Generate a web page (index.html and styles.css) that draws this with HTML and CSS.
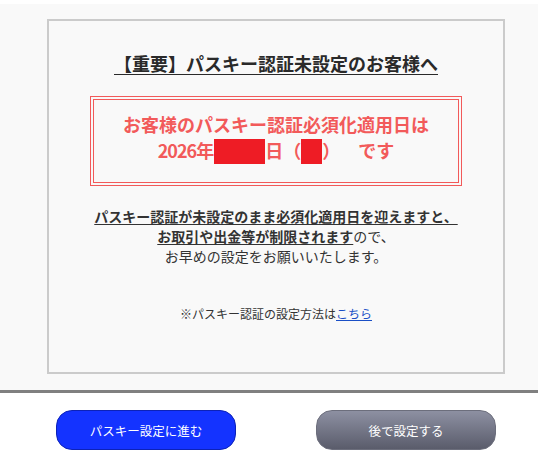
FILE: index.html
```html
<!DOCTYPE html>
<html lang="ja">
<head>
<meta charset="utf-8">
<link rel="stylesheet" href="styles.css">
</head>
<body>
<div class="top-gap"></div>
<div class="panel">
  <div class="notice">
    <h1 class="title">【重要】パスキー認証未設定のお客様へ</h1>
    <div class="alert">
      <div class="alert-inner">
        <p class="alert-line">お客様のパスキー認証必須化適用日は</p>
        <p class="alert-line"><span class="year">2026</span>年<span class="redact redact-wide"></span>日（<span class="redact redact-narrow"></span>）<span class="gap"></span>です</p>
      </div>
    </div>
    <div class="body-text">
      <p class="line"><span class="em">パスキー認証が未設定のまま必須化適用日を迎えますと、</span></p>
      <p class="line"><span class="em">お取引や出金等が制限されます</span>ので、</p>
      <p class="line">お早めの設定をお願いいたします。</p>
    </div>
    <p class="howto">※パスキー認証の設定方法は<a class="link" href="#">こちら</a></p>
  </div>
</div>
<div class="actions">
  <button class="btn btn-primary">パスキー設定に進む</button>
  <button class="btn btn-secondary">後で設定する</button>
</div>
</body>
</html>
```
FILE: styles.css
```css
html, body {
  margin: 0;
  padding: 0;
  background: #ffffff;
}
body {
  font-family: "Noto Sans CJK JP", "Noto Sans", sans-serif;
  color: #333333;
  padding-left: 14px;
}
p, h1 { margin: 0; }

.top-gap { height: 4px; }

.panel {
  background: #f9f9f9;
  padding: 15px 0 16px;
  border-bottom: 3px solid #808080;
  margin-left: -14px;
  padding-left: 14px;
}

.notice {
  width: 454px;
  margin: 0 auto;
  border: 2px solid #cbcbcb;
  padding: 30px 0 48px;
  text-align: center;
}

.title {
  font-size: 18px;
  line-height: 24px;
  font-weight: bold;
  color: #2a2a2a;
  text-decoration: underline;
  text-underline-offset: 3px;
}

.alert {
  width: 366px;
  margin: 21px auto 0;
  border: 1px solid #f25a5a;
  padding: 2px;
}
.alert-inner {
  border: 1px solid #f25a5a;
  padding: 11px 0 18px;
}
.alert-line {
  font-size: 18px;
  line-height: 26px;
  font-weight: bold;
  color: #f25a5a;
  white-space: nowrap;
  text-spacing-trim: space-all;
}
.year {
  letter-spacing: -1px;
}
.redact {
  display: inline-block;
  background: #ee1c25;
  height: 25px;
  vertical-align: -6px;
}
.redact-wide { width: 51px; }
.redact-narrow { width: 21px; }
.gap {
  display: inline-block;
  width: 18px;
}

.body-text {
  margin-top: 20px;
  font-size: 14px;
  line-height: 20px;
  color: #333333;
}
.em {
  font-weight: bold;
  text-decoration: underline;
  text-underline-offset: 2px;
}

.howto {
  margin-top: 38px;
  font-size: 12px;
  line-height: 20px;
  color: #333333;
}
.link {
  color: #1a4fc6;
  text-decoration: underline;
}

.actions {
  display: flex;
  justify-content: center;
  gap: 80px;
  padding-top: 17px;
}
.btn {
  width: 180px;
  height: 40px;
  border-radius: 16px;
  font-family: "Noto Sans CJK JP", "Noto Sans", sans-serif;
  font-size: 12.5px;
  color: #ffffff;
  cursor: pointer;
  padding: 0;
}
.btn-primary {
  background: #1433ff;
  border: 1px solid #0c22b8;
}
.btn-secondary {
  background: linear-gradient(#8d90a2, #5a5c6b);
  border: 1px solid #6c6e7c;
}
```
